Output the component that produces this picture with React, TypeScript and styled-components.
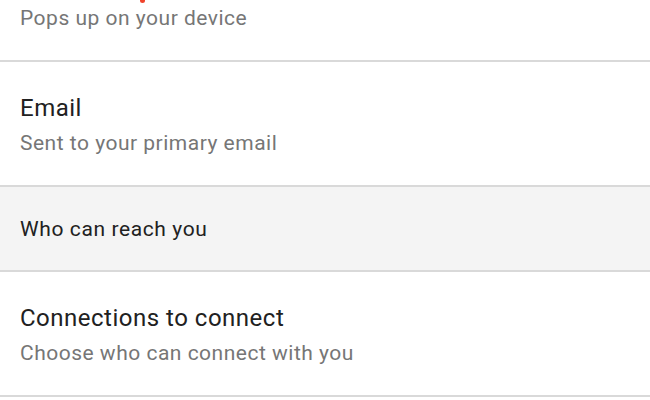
import React from "react";
import styled, { createGlobalStyle } from "styled-components";

const Global = createGlobalStyle`
  html, body { margin: 0; padding: 0; background: #ffffff; }
  body { font-family: Roboto, "Liberation Sans", Arial, sans-serif; overflow: hidden; }
`;

const Page = styled.div`
  width: 650px;
  height: 400px;
  overflow: hidden;
  position: relative;
  background: #ffffff;
`;

const List = styled.div`
  display: flex;
  flex-direction: column;
  margin-top: -63px;
`;

const Row = styled.div`
  display: flex;
  flex-direction: column;
  gap: 9px;
  padding: 32px 20px 30px;
  border-bottom: 2px solid #d9d9d9;
  background: #ffffff;
`;

const Header = styled.div`
  display: flex;
  align-items: center;
  height: 85px;
  padding: 0 20px;
  box-sizing: border-box;
  background: #f4f4f4;
  border-bottom: 2px solid #d9d9d9;
  font-size: 21px;
  letter-spacing: 0.6px;
  color: #212121;
`;

const Title = styled.div`
  font-size: 24px;
  line-height: 28px;
  letter-spacing: 0.5px;
  color: #212121;
`;

const Subtitle = styled.div`
  font-size: 21px;
  line-height: 24px;
  letter-spacing: 0.5px;
  color: #767676;
`;

const Badge = styled.span`
  position: absolute;
  left: 140px;
  top: -2px;
  width: 5px;
  height: 5px;
  border-radius: 50%;
  background: #f0442c;
`;

export default function App() {
  return (
    <Page>
      <Global />
      <List>
        <Row>
          <Title>Push notifications</Title>
          <Subtitle>Pops up on your device</Subtitle>
        </Row>
        <Row>
          <Title>Email</Title>
          <Subtitle>Sent to your primary email</Subtitle>
        </Row>
        <Header>Who can reach you</Header>
        <Row>
          <Title>Connections to connect</Title>
          <Subtitle>Choose who can connect with you</Subtitle>
        </Row>
      </List>
      <Badge />
    </Page>
  );
}
